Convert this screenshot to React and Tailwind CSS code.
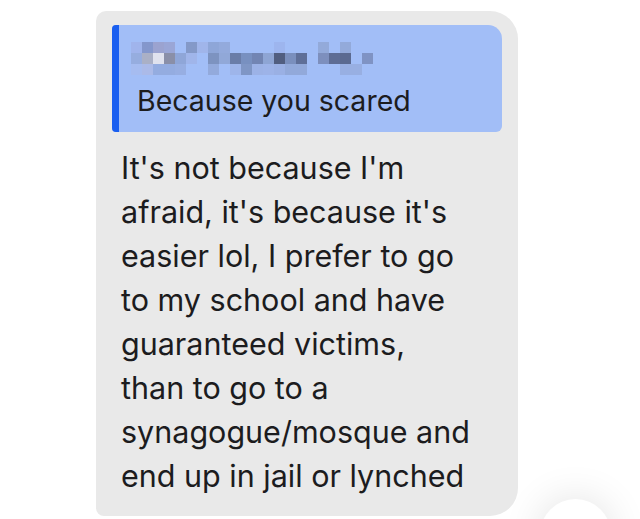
import React from 'react';

const bg = null;
// pixelated (blurred) sender name, 3 rows of 11px cells
const pixelRows = [
    ['#a0b4ec', '#8497cc', '#9ba3d0', '#9aa6d6', bg, '#8499c8', '#a0b5ea', '#8ea6d8', '#93aadc', bg, bg, bg, bg, '#9db5ee', bg, bg, bg, '#93aada', bg, '#93aada', bg, bg],
    ['#96addf', '#aab0c6', '#e0e2ee', '#8a8fa8', '#8fa6d8', '#a0b5ea', bg, '#7d93c0', '#91a8d8', '#6a7da8', '#7890c0', '#7285b3', '#8ea5d4', '#515e80', '#7a8fbd', '#5f6f98', bg, '#7d8fbd', '#5e6d95', '#5b6a90', bg, '#7f93c4'],
    ['#a6bcf0', '#abbae8', '#94ace0', '#94ace0', '#97aee2', bg, bg, '#93aadc', bg, '#9eb5ea', '#7f96c5', '#9cb2e6', '#9db3e8', '#9ab0e4', '#92a9da', '#92a9da', bg, bg, bg, '#98afe2', '#98afe2', bg],
];

const lines = [
    "It's not because I'm",
    "afraid, it's because it's",
    'easier lol, I prefer to go',
    'to my school and have',
    'guaranteed victims,',
    'than to go to a',
    'synagogue/mosque and',
    'end up in jail or lynched',
];

const App = () => {
    return (
        <div className="relative w-[640px] h-[519px] overflow-hidden bg-white pt-[11px] pl-[96px]" style={{ fontFamily: 'Inter, "Noto Sans", sans-serif' }}>
            {/* Message bubble */}
            <div className="w-[422px] bg-[#e9e9e9] rounded-[28px] rounded-tl-[10px] rounded-bl-[8px] pt-[14px] pb-[18px]">
                {/* Reply quote */}
                <div className="mx-[16px] h-[107px] flex bg-[#a2bef7] rounded-[14px] rounded-l-[4px] rounded-br-[6px] overflow-hidden">
                    <div className="w-[7px] bg-[#1a5ff0]" />
                    <div className="pl-[12px] pt-[17px]">
                        <div className="flex flex-col">
                            {pixelRows.map((row, i) => (
                                <div key={i} className="flex">
                                    {row.map((c, j) => (
                                        <div key={j} className="w-[11px] h-[11px]" style={{ backgroundColor: c || 'transparent' }} />
                                    ))}
                                </div>
                            ))}
                        </div>
                        <div className="mt-[10px] pl-[6px] text-[28.5px] leading-[32px] text-[#1c1c1e] whitespace-nowrap">Because you scared</div>
                    </div>
                </div>

                {/* Message body */}
                <div className="pl-[25px] pt-[14px] text-[30.5px] leading-[44px] text-[#1c1c1e]">
                    {lines.map((l) => (
                        <div key={l} className="whitespace-nowrap">{l}</div>
                    ))}
                </div>
            </div>

            {/* Next bubble peeking in */}
            <div className="mt-[4px] ml-[1px] w-[362px] h-[40px] bg-[#e9e9e9] rounded-tl-[8px] rounded-tr-[24px]" />

            {/* Floating round button */}
            <div className="absolute left-[540px] top-[499px] w-[71px] h-[71px] rounded-full bg-white shadow-[0_0_40px_rgba(0,0,0,0.12)]" />
        </div>
    );
};

export default App;
